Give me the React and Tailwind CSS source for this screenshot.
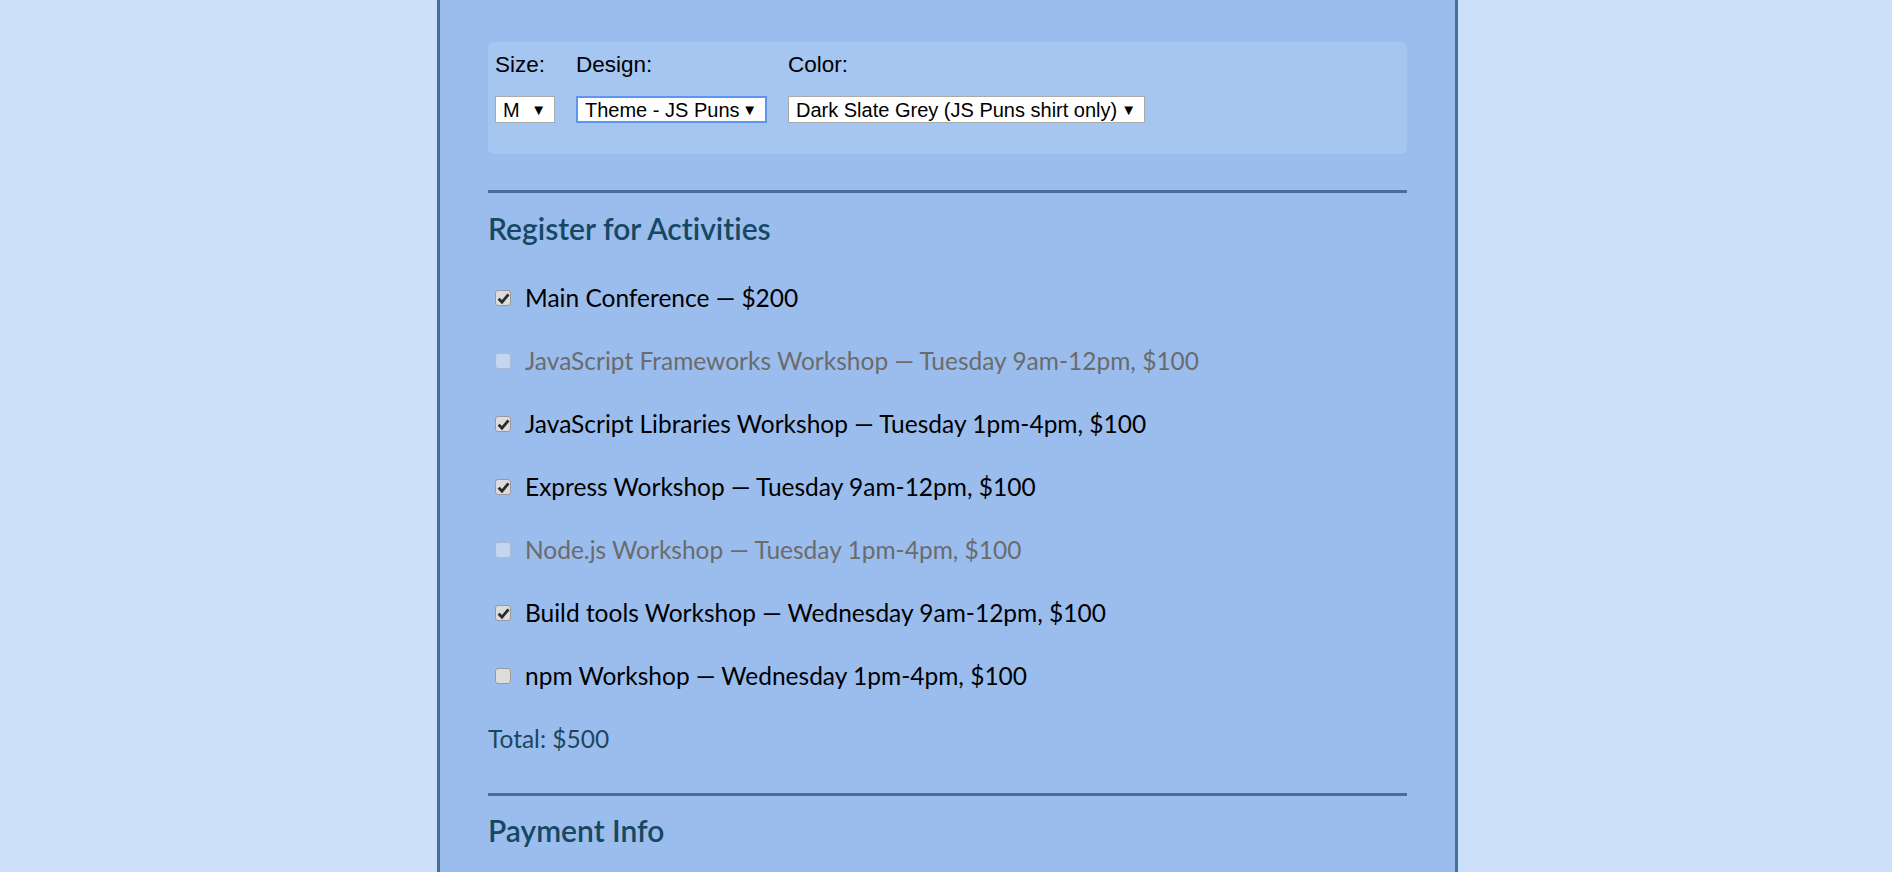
import React from "react";

const activities = [
  { label: "Main Conference — $200", checked: true },
  { label: "JavaScript Frameworks Workshop — Tuesday 9am-12pm, $100", disabled: true },
  { label: "JavaScript Libraries Workshop — Tuesday 1pm-4pm, $100", checked: true },
  { label: "Express Workshop — Tuesday 9am-12pm, $100", checked: true },
  { label: "Node.js Workshop — Tuesday 1pm-4pm, $100", disabled: true },
  { label: "Build tools Workshop — Wednesday 9am-12pm, $100", checked: true },
  { label: "npm Workshop — Wednesday 1pm-4pm, $100" },
];

const arial = { fontFamily: "'Liberation Sans', Arial, sans-serif" };

function FakeSelect({ value, width, focused }) {
  return (
    <div
      className={`flex items-center justify-between h-[27px] bg-white pl-[7px] pr-[8px] text-[20px] leading-none text-black ${width} ${
        focused ? "border-2 border-[#5d96f2]" : "border border-[#a9a9a9]"
      }`}
      style={arial}
    >
      <span>{value}</span>
      <span className="text-[15px]">▼</span>
    </div>
  );
}

function Box({ checked, disabled }) {
  if (disabled) {
    return (
      <div className="w-[16px] h-[16px] rounded-[3px] border border-[#a9bad4] bg-[#c4d5ef] shrink-0" />
    );
  }
  return (
    <div className="w-[16px] h-[16px] rounded-[3px] border border-[#9a9a9a] bg-[#dcdcdc] shrink-0 flex items-center justify-center">
      {checked && (
        <svg width="13" height="13" viewBox="0 0 12 12">
          <path d="M1.5 6.2 L4.6 9.3 L10.6 2.2" fill="none" stroke="#2b2b2b" strokeWidth="2.6" />
        </svg>
      )}
    </div>
  );
}

export default function App() {
  return (
    <div className="h-screen overflow-hidden bg-[#cde0fa] flex justify-center pl-[3px]">
      <div
        className="w-[1021px] h-full bg-[#9bbdee] border-x-[3px] border-[#43719a] px-[48px] pt-[42px] [font-variant-ligatures:none]"
        style={{ fontFamily: "Lato, 'Noto Sans', sans-serif" }}
      >
        {/* shirt options */}
        <div className="bg-[#a5c6f1] rounded-[6px] px-[7px] pt-[11px] pb-[31px] flex gap-[21px]">
          <div className="flex flex-col">
            <label className="text-[22.5px] leading-[24px] text-black mb-[19px]" style={arial}>
              Size:
            </label>
            <FakeSelect value="M" width="w-[60px]" />
          </div>
          <div className="flex flex-col">
            <label className="text-[22.5px] leading-[24px] text-black mb-[19px]" style={arial}>
              Design:
            </label>
            <FakeSelect value="Theme - JS Puns" width="w-[191px]" focused />
          </div>
          <div className="flex flex-col">
            <label className="text-[22.5px] leading-[24px] text-black mb-[19px]" style={arial}>
              Color:
            </label>
            <FakeSelect value="Dark Slate Grey (JS Puns shirt only)" width="w-[357px]" />
          </div>
        </div>

        <div className="h-[3px] bg-[#43719a] mt-[36px]" />

        <h2 className="text-[30px] leading-[32px] font-semibold text-[#174862] mt-[19px]">
          Register for Activities
        </h2>

        <div className="mt-[38px] flex flex-col gap-[31px]">
          {activities.map((a) => (
            <div key={a.label} className="flex items-center h-[32px] pl-[7px]">
              <Box checked={a.checked} disabled={a.disabled} />
              <span
                className={`ml-[14px] text-[24.5px] leading-[32px] ${
                  a.disabled ? "text-[#6b6b6b]" : "text-black"
                }`}
              >
                {a.label}
              </span>
            </div>
          ))}
        </div>

        <p className="mt-[31px] text-[24.5px] leading-[32px] text-[#1d4660]">Total: $500</p>

        <div className="h-[3px] bg-[#43719a] mt-[38px]" />

        <h2 className="text-[30px] leading-[32px] font-semibold text-[#174862] mt-[18px]">
          Payment Info
        </h2>
      </div>
    </div>
  );
}
